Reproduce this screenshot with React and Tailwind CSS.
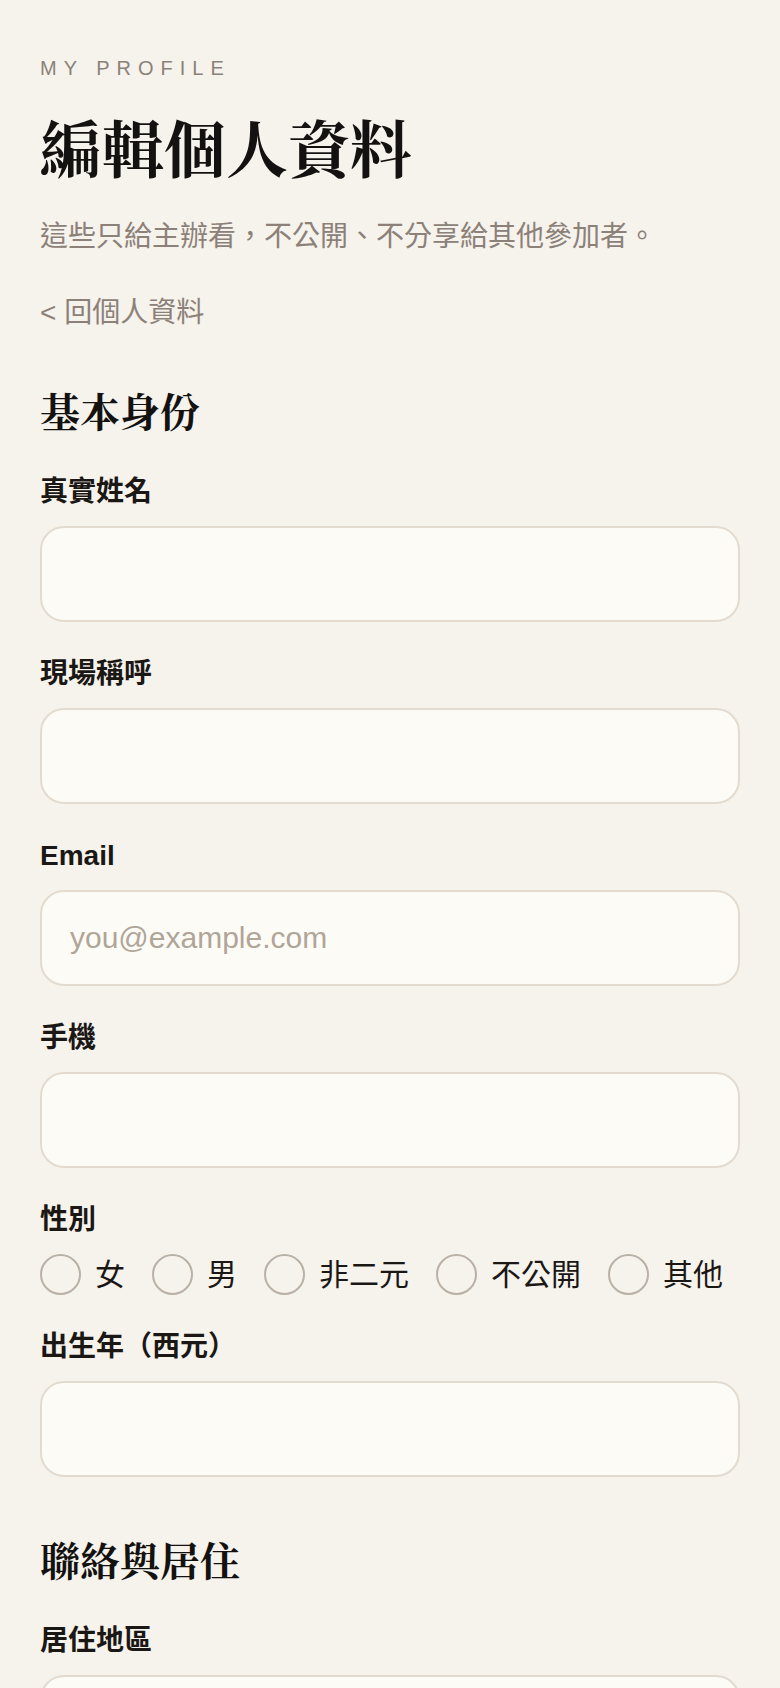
import { useState } from "react";

const genders = ["女", "男", "非二元", "不公開", "其他"];

const Field = ({ label, type = "text", placeholder }) => (
  <div className="flex flex-col">
    <label className="text-[28px] leading-[36px] font-bold text-[#1a1714] mb-4">{label}</label>
    <input
      type={type}
      placeholder={placeholder}
      className="h-[96px] w-full rounded-[24px] border-2 border-[#e3dbcf] bg-[#fdfbf6] px-7 text-[30px] text-[#1a1714] outline-none placeholder:text-[#afa598]"
    />
  </div>
);

const SectionTitle = ({ children }) => (
  <h2 className="font-[family-name:'Noto_Serif_CJK_TC','Noto_Sans_CJK_TC',serif] text-[40px] leading-[52px] font-bold text-[#141210] mb-[38px]">
    {children}
  </h2>
);

const App = () => {
  const [gender, setGender] = useState("");

  return (
    <div className="min-h-screen bg-[#f6f2ec] px-10 pt-[54px] pb-20 font-[family-name:'Liberation_Sans','Noto_Sans_CJK_TC',sans-serif]">
      <div className="text-[20px] leading-[28px] tracking-[0.35em] text-[#8a8279]">MY PROFILE</div>

      <h1 className="mt-[29px] font-[family-name:'Noto_Serif_CJK_TC','Noto_Sans_CJK_TC',serif] text-[62px] leading-[72px] font-bold text-[#141210]">
        編輯個人資料
      </h1>

      <p className="mt-[32px] text-[28px] leading-[44px] text-[#8b8178]">
        這些只給主辦看，不公開、不分享給其他參加者。
      </p>

      <a href="#" className="mt-[32px] block text-[28px] leading-[44px] text-[#8b8178]">
        &lt; 回個人資料
      </a>

      {/* 基本身份 */}
      <section className="mt-[49px]">
        <SectionTitle>基本身份</SectionTitle>
        <div className="flex flex-col gap-[34px]">
          <Field label="真實姓名" />
          <Field label="現場稱呼" />
          <Field label="Email" type="email" placeholder="you@example.com" />
          <Field label="手機" type="tel" />

          <div className="flex flex-col">
            <span className="text-[28px] leading-[36px] font-bold text-[#1a1714] mb-4">性別</span>
            <div className="flex flex-wrap items-center gap-x-[27px] gap-y-3">
              {genders.map((g) => (
                <label key={g} className="flex items-center gap-[14px] cursor-pointer">
                  <input
                    type="radio"
                    name="gender"
                    checked={gender === g}
                    onChange={() => setGender(g)}
                    className="appearance-none w-[41px] h-[41px] rounded-full border-2 border-[#bab1a6] bg-transparent checked:border-[12px] checked:border-[#1a1714]"
                  />
                  <span className="text-[30px] leading-[40px] text-[#1a1714]">{g}</span>
                </label>
              ))}
            </div>
          </div>

          <Field label="出生年（西元）" type="number" />
        </div>
      </section>

      {/* 聯絡與居住 */}
      <section className="mt-[56px]">
        <SectionTitle>聯絡與居住</SectionTitle>
        <div className="flex flex-col gap-[34px]">
          <Field label="居住地區" />
          <Field label="緊急聯絡人" />
        </div>
      </section>
    </div>
  );
};

export default App;
